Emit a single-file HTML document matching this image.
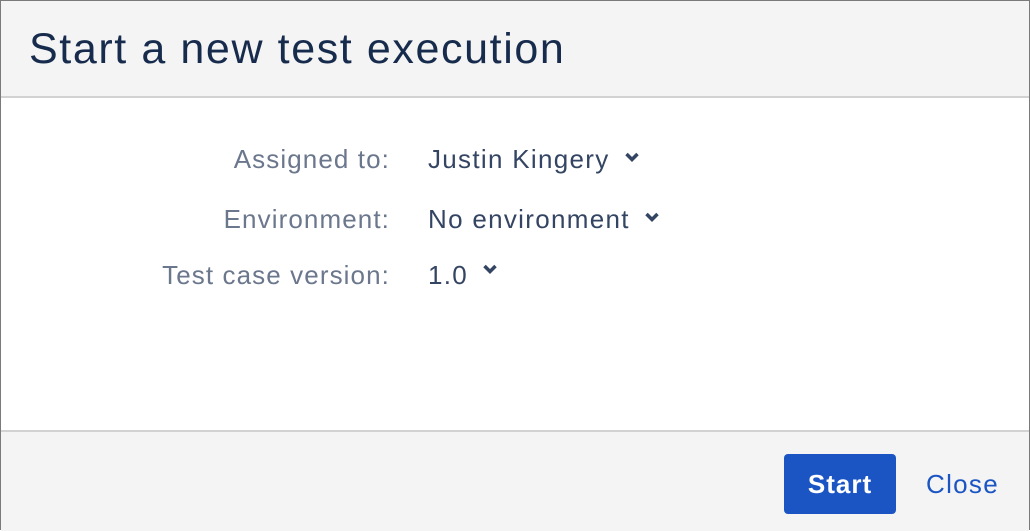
<!DOCTYPE html>
<html><head><style>
body{margin:0;width:1030px;height:530px;overflow:hidden;font-family:"Liberation Sans",sans-serif;background:#fff}
.f{position:absolute;left:0;top:0;width:1028px;height:528px;border:1px solid #7a7a7a;background:#fff}
.h{position:absolute;left:0;top:0;width:1028px;height:95px;background:#f4f4f4;border-bottom:2px solid #d2d2d2}
.t{position:absolute;left:28px;top:24px;font-size:43px;letter-spacing:1.6px;color:#172b4d;line-height:48px;white-space:nowrap}
.l{position:absolute;right:639px;font-size:26px;letter-spacing:1.1px;color:#6b778c;white-space:nowrap;line-height:28px}
.v{position:absolute;left:427px;font-size:26px;letter-spacing:1.3px;color:#344563;white-space:nowrap;line-height:28px}
.c{display:inline-block;vertical-align:middle;margin-left:14px;margin-top:-8px}
.ft{position:absolute;left:0;top:429px;width:1028px;height:99px;background:#f4f4f4;border-top:2px solid #d2d2d2}
.b{position:absolute;left:783px;top:22px;width:112px;height:60px;background:#1b55c4;border-radius:4px;color:#fff;font-weight:bold;font-size:26px;letter-spacing:1px;text-align:center;line-height:60px}
.cl{position:absolute;left:925px;top:22px;line-height:60px;font-size:26px;letter-spacing:1.3px;color:#1b55c4}
</style></head><body><div class="f">
<div class="h"><div class="t">Start a new test execution</div></div>
<div class="l" style="top:144px">Assigned to:</div>
<div class="v" style="top:144px">Justin Kingery<svg class="c" width="16" height="12" viewBox="0 0 16 12"><path d="M2.5 3l5.5 5.5 5.5-5.5" stroke="#344563" stroke-width="3.5" fill="none"/></svg></div>
<div class="l" style="top:204px">Environment:</div>
<div class="v" style="top:204px">No environment<svg class="c" width="16" height="12" viewBox="0 0 16 12"><path d="M2.5 3l5.5 5.5 5.5-5.5" stroke="#344563" stroke-width="3.5" fill="none"/></svg></div>
<div class="l" style="top:260px">Test case version:</div>
<div class="v" style="top:260px">1.0<svg class="c" style="margin-top:-16px;margin-left:14px" width="16" height="12" viewBox="0 0 16 12"><path d="M2.5 3l5.5 5.5 5.5-5.5" stroke="#344563" stroke-width="3.5" fill="none"/></svg></div>
<div class="ft"><div class="b">Start</div><div class="cl">Close</div></div>
</div></body></html>
